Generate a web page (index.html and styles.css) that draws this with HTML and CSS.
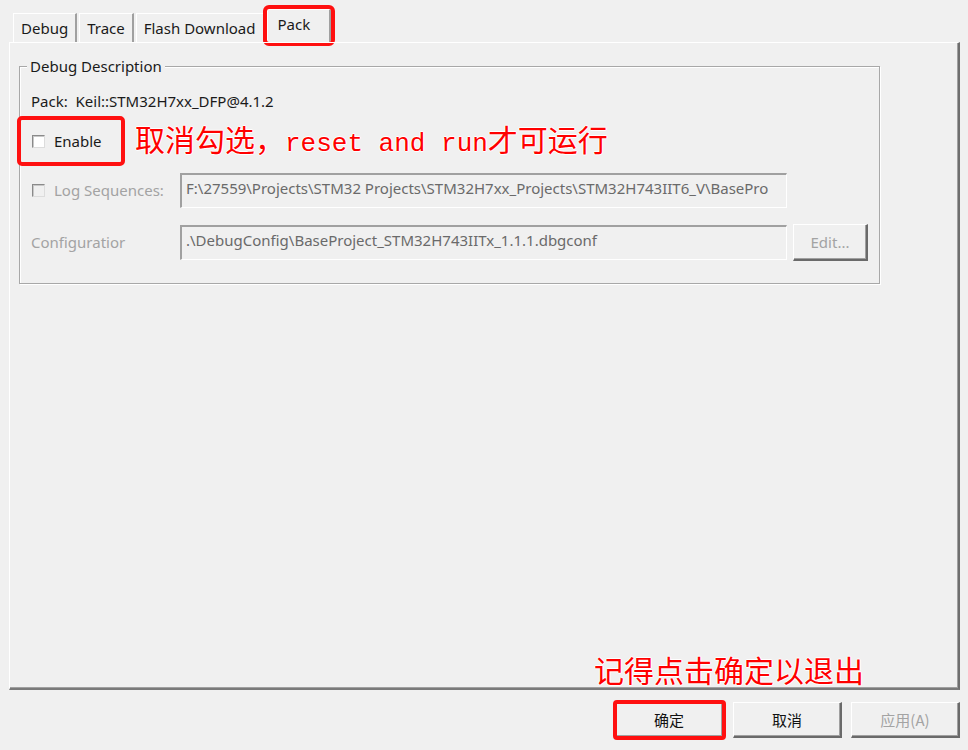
FILE: index.html
```html
<!DOCTYPE html>
<html lang="zh">

<head>
    <meta charset="UTF-8">
    <title>Options for Target - Debug Settings</title>
    <link rel="stylesheet" href="styles.css">
</head>

<body>
    <div class="dialog">
        <div class="tabs">
            <div class="tab">Debug</div>
            <div class="tab">Trace</div>
            <div class="tab">Flash Download</div>
            <div class="tab active marked">Pack</div>
        </div>

        <div class="panel">
            <div class="group">
                <span class="group-title">Debug Description</span>

                <p class="pack-line">Pack:&nbsp; Keil::STM32H7xx_DFP@4.1.2</p>

                <div class="enable-row">
                    <label class="check-box marked">
                        <span class="check"></span>
                        Enable
                    </label>
                    <span class="note">取消勾选，<span class="mono">reset and run</span>才可运行</span>
                </div>

                <div class="field-row">
                    <label class="check-box disabled">
                        <span class="check"></span>
                        Log Sequences:
                    </label>
                    <div class="text-box">F:\27559\Projects\STM32 Projects\STM32H7xx_Projects\STM32H743IIT6_V\BasePro</div>
                </div>

                <div class="field-row">
                    <span class="field-label">Configuratior</span>
                    <div class="text-box">.\DebugConfig\BaseProject_STM32H743IITx_1.1.1.dbgconf</div>
                    <button class="btn edit-btn" disabled>Edit...</button>
                </div>
            </div>

            <span class="note note-exit">记得点击确定以退出</span>
        </div>

        <div class="footer">
            <button class="btn ok-btn marked">确定</button>
            <button class="btn">取消</button>
            <button class="btn" disabled>应用(A)</button>
        </div>
    </div>
</body>

</html>
```

FILE: styles.css
```css
body {
    margin: 0;
    background-color: #f0f0f0;
    font-family: "Noto Sans", "Noto Sans CJK SC", sans-serif;
    font-size: 15px;
    color: #1a1a1a;
}

.dialog {
    width: 968px;
    height: 750px;
    overflow: hidden;
}

/* pestañas */
.tabs {
    display: flex;
    align-items: flex-end;
    height: 42px;
    padding-left: 13px;
    gap: 2px;
}

.tab {
    height: 28px;
    padding: 0 7px;
    line-height: 28px;
    border-top: 1px solid #ffffff;
    border-left: 1px solid #ffffff;
    border-right: 2px solid #a0a0a0;
    background: #f0f0f0;
}

.tab.active {
    width: 64px;
    height: 33px;
    line-height: 28px;
    padding: 0 0 0 10px;
    box-sizing: border-box;
}

.marked {
    outline: 4px solid #ff1010;
    outline-offset: -1px;
    border-radius: 2px;
}

.tab.marked {
    outline-offset: 0;
}

/* panel principal */
.panel {
    position: relative;
    margin: 0 8px 0 9px;
    height: 645px;
    border-top: 1px solid #ffffff;
    border-left: 1px solid #ffffff;
    border-right: 2px solid #6e6e6e;
    border-bottom: 2px solid #7a7a7a;
    box-shadow: inset -1px -1px 0 #a0a0a0;
}

.group {
    position: relative;
    margin: 23px 0 0 9px;
    width: 859px;
    height: 216px;
    border: 1px solid #a8a8a8;
    box-shadow: 1px 1px 0 #ffffff, inset 1px 1px 0 #ffffff;
}

.group-title {
    position: absolute;
    top: -11px;
    left: 7px;
    padding: 0 3px;
    background: #f0f0f0;
    line-height: 20px;
}

.pack-line {
    margin: 24px 0 0 11px;
    line-height: 20px;
}

.enable-row {
    display: flex;
    align-items: center;
    gap: 13px;
    margin-top: 8px;
}

.check-box {
    display: flex;
    align-items: center;
    gap: 9px;
    padding: 0 12px;
    height: 44px;
    line-height: 20px;
}

.enable-row .check-box {
    width: 78px;
}

.check {
    width: 11px;
    height: 11px;
    background: #ffffff;
    border-top: 1px solid #8a8a8a;
    border-left: 1px solid #8a8a8a;
    border-right: 1px solid #dcdcdc;
    border-bottom: 1px solid #dcdcdc;
    box-shadow: inset 1px 1px 0 #c8c8c8;
}

.disabled {
    color: #a3a3a3;
}

.disabled .check {
    background: #f0f0f0;
}

.note {
    font-family: "Noto Sans CJK SC", sans-serif;
    font-size: 30px;
    color: #ff0000;
    line-height: 36px;
    text-shadow: 1px 0 0 #fff, -1px 0 0 #fff, 0 1px 0 #fff, 0 -1px 0 #fff;
}

.mono {
    font-family: "Liberation Mono", "DejaVu Sans Mono", monospace;
    font-size: 26px;
}

.field-row {
    display: flex;
    align-items: center;
    height: 36px;
    margin-top: 9px;
}

.field-row + .field-row {
    margin-top: 16px;
}

.field-row .check-box {
    width: 136px;
    height: 36px;
}

.field-label {
    width: 149px;
    padding-left: 11px;
    color: #a3a3a3;
}

.text-box {
    width: 600px;
    height: 31px;
    padding: 1px 0 0 4px;
    line-height: 24px;
    color: #6a6a6a;
    white-space: nowrap;
    overflow: hidden;
    border-top: 2px solid #a0a0a0;
    border-left: 2px solid #a0a0a0;
    border-right: 1px solid #ffffff;
    border-bottom: 1px solid #ffffff;
}

.btn {
    font-family: "Noto Sans CJK SC", "Noto Sans", sans-serif;
    font-size: 15px;
    background: #f0f0f0;
    color: #111;
    border-top: 1px solid #ffffff;
    border-left: 1px solid #ffffff;
    border-right: 2px solid #6a6a6a;
    border-bottom: 2px solid #6a6a6a;
    box-shadow: inset -1px -1px 0 #a0a0a0;
    padding: 0;
}

.btn:disabled {
    color: #a3a3a3;
}

.edit-btn {
    width: 75px;
    height: 37px;
    margin-left: 6px;
    font-family: "Noto Sans", sans-serif;
}

.note-exit {
    position: absolute;
    right: 94px;
    bottom: 1px;
}

.footer {
    display: flex;
    justify-content: flex-end;
    gap: 9px;
    padding: 12px 8px 0 0;
}

.footer .btn {
    width: 109px;
    height: 36px;
}

.ok-btn.marked {
    outline-offset: -2px;
}
```
